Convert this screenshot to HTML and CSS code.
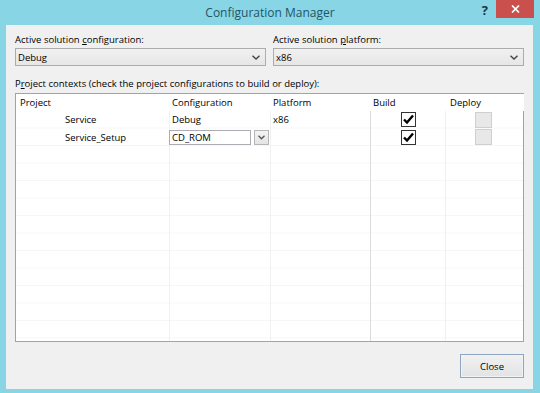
FILE: index.html
```html
<!DOCTYPE html>
<html lang="en">
<head>
    <meta charset="UTF-8">
    <title>Configuration Manager</title>
    <link rel="stylesheet" href="styles.css">
</head>
<body>

    <div class="window">
        <div class="titlebar">
            <div></div>
            <div class="title">Configuration Manager</div>
            <div class="controls">
                <span class="help">?</span>
                <span class="close-x">
                    <svg width="9" height="8" viewBox="0 0 9 8"><path d="M1 0.5 L8 7.5 M8 0.5 L1 7.5" stroke="#fff" stroke-width="1.7"/></svg>
                </span>
            </div>
        </div>

        <div class="client">
            <div class="solution-row">
                <div class="field">
                    <label>Active solution <u>c</u>onfiguration:</label>
                    <div class="combo">
                        <span class="combo-text">Debug</span>
                        <svg class="chevron" width="8" height="5" viewBox="0 0 8 5"><path d="M0.5 0.8 L4 4 L7.5 0.8" fill="none" stroke="#444" stroke-width="1.4"/></svg>
                    </div>
                </div>
                <div class="field">
                    <label>Active solution <u>p</u>latform:</label>
                    <div class="combo">
                        <span class="combo-text">x86</span>
                        <svg class="chevron" width="8" height="5" viewBox="0 0 8 5"><path d="M0.5 0.8 L4 4 L7.5 0.8" fill="none" stroke="#444" stroke-width="1.4"/></svg>
                    </div>
                </div>
            </div>

            <div class="contexts-label">P<u>r</u>oject contexts (check the project configurations to build or deploy):</div>

            <div class="grid">
                <div class="head first">Project</div>
                <div class="head">Configuration</div>
                <div class="head">Platform</div>
                <div class="head">Build</div>
                <div class="head deploy">Deploy</div>
                <div class="head"></div>

                <!-- Service -->
                <div class="cell name">Service</div>
                <div class="cell line">Debug</div>
                <div class="cell line">x86</div>
                <div class="cell line build center"><span class="check on"><svg width="13" height="13" viewBox="0 0 13 13"><path d="M2 6.5 L5 9.5 L11 2.5" fill="none" stroke="#000" stroke-width="2.4"/></svg></span></div>
                <div class="cell line center"><span class="check off"></span></div>
                <div class="cell"></div>

                <!-- Service_Setup -->
                <div class="cell name">Service_Setup</div>
                <div class="cell line">
                    <div class="cell-combo">
                        <span class="cell-combo-box">CD_ROM</span>
                        <span class="cell-combo-btn"><svg width="7" height="5" viewBox="0 0 7 5"><path d="M0.5 0.8 L3.5 3.8 L6.5 0.8" fill="none" stroke="#555" stroke-width="1.3"/></svg></span>
                    </div>
                </div>
                <div class="cell line"></div>
                <div class="cell line build center"><span class="check on"><svg width="13" height="13" viewBox="0 0 13 13"><path d="M2 6.5 L5 9.5 L11 2.5" fill="none" stroke="#000" stroke-width="2.4"/></svg></span></div>
                <div class="cell line center"><span class="check off"></span></div>
                <div class="cell"></div>

                <!-- empty space -->
                <div class="filler"></div>
                <div class="filler line"></div>
                <div class="filler line"></div>
                <div class="filler line build"></div>
                <div class="filler line"></div>
                <div class="filler"></div>
            </div>

            <div class="footer">
                <button class="btn">Close</button>
            </div>
        </div>
    </div>

</body>
</html>
```

FILE: styles.css
```css
body {
    margin: 0;
    font-family: "Open Sans", "Noto Sans", sans-serif;
    font-size: 9.5px;
    color: #000;
}

.window {
    width: 540px;
    height: 393px;
    background-color: #88d5e5;
    display: flex;
    flex-direction: column;
}

.titlebar {
    height: 25px;
    display: grid;
    grid-template-columns: 1fr auto 1fr;
}

.title {
    align-self: center;
    font-size: 12px;
    color: #1f5667;
    padding-bottom: 1px;
}

.controls {
    justify-self: end;
    display: flex;
    align-items: flex-start;
    margin-right: 6px;
}

.help {
    font-weight: bold;
    font-size: 13px;
    line-height: 20px;
    color: #1f3440;
    margin-right: 8px;
}

.close-x {
    width: 38px;
    height: 18px;
    background-color: #c9504d;
    display: flex;
    align-items: center;
    justify-content: center;
}

.client {
    flex: 1;
    margin: 0 7px 4px 6px;
    background-color: #f0f0f0;
    padding: 7px 9px 0 9px;
    display: flex;
    flex-direction: column;
}

.solution-row {
    display: flex;
    gap: 7px;
}

.field {
    flex: 1;
    display: flex;
    flex-direction: column;
}

label {
    line-height: 16px;
}

.combo {
    height: 18px;
    box-sizing: border-box;
    border: 1px solid #acacac;
    background: linear-gradient(#f1f1f1, #e6e6e6);
    display: flex;
    align-items: center;
    padding-left: 2px;
}

.combo-text {
    flex: 1;
}

.chevron {
    margin-right: 5px;
}

.contexts-label {
    line-height: 16px;
    margin-top: 10px;
}

.grid {
    margin-top: 1px;
    height: 249px;
    box-sizing: border-box;
    border: 1px solid #a3a3a3;
    background-color: #fff;
    background-image: linear-gradient(to bottom, transparent 16.5px, #f6f6f6 16.5px);
    background-size: 100% 17.5px;
    background-position: 0 17px;
    display: grid;
    grid-template-columns: 153px 101px 100px 75px 76px 1fr;
    grid-template-rows: 17px 17.5px 17.5px 1fr;
}

.head {
    background-color: #fff;
    line-height: 17px;
    padding-left: 3px;
}

.head.first {
    padding-left: 4px;
}

.head.deploy {
    padding-left: 5px;
}

.cell {
    display: flex;
    align-items: center;
    padding-left: 2px;
    box-sizing: border-box;
}

.cell.name {
    padding-left: 49px;
}

.line {
    border-left: 1px solid #f0f0f0;
}

.line.build {
    border-left-color: #dcdcdc;
}

.center {
    justify-content: center;
    padding-left: 0;
}

.check {
    width: 15px;
    height: 15px;
    box-sizing: border-box;
    display: flex;
    align-items: center;
    justify-content: center;
}

.check.on {
    border: 1px solid #333;
    background-color: #fff;
}

.check.off {
    width: 17px;
    height: 16px;
    border: 1px solid #cfcfcf;
    background-color: #e8e8e8;
}

.cell-combo {
    display: flex;
    gap: 3px;
    margin-left: -3px;
}

.cell-combo-box {
    width: 82px;
    height: 15px;
    box-sizing: border-box;
    border: 1px solid #abadb3;
    background-color: #fff;
    padding-left: 2px;
    line-height: 13px;
}

.cell-combo-btn {
    width: 15px;
    height: 15px;
    box-sizing: border-box;
    border: 1px solid #b5b5b5;
    background: linear-gradient(#f4f4f4, #e4e4e4);
    display: flex;
    align-items: center;
    justify-content: center;
}

.footer {
    display: flex;
    justify-content: flex-end;
    margin-top: 12px;
}

.btn {
    width: 64px;
    height: 24px;
    border: 1px solid #8ea6c2;
    background: linear-gradient(#f1f1f1, #e3e3e3);
    box-shadow: inset 0 0 0 1px #eef3f8;
    font-family: "Open Sans", "Noto Sans", sans-serif;
    font-size: 9.5px;
    color: #000;
    padding: 0;
}
```
